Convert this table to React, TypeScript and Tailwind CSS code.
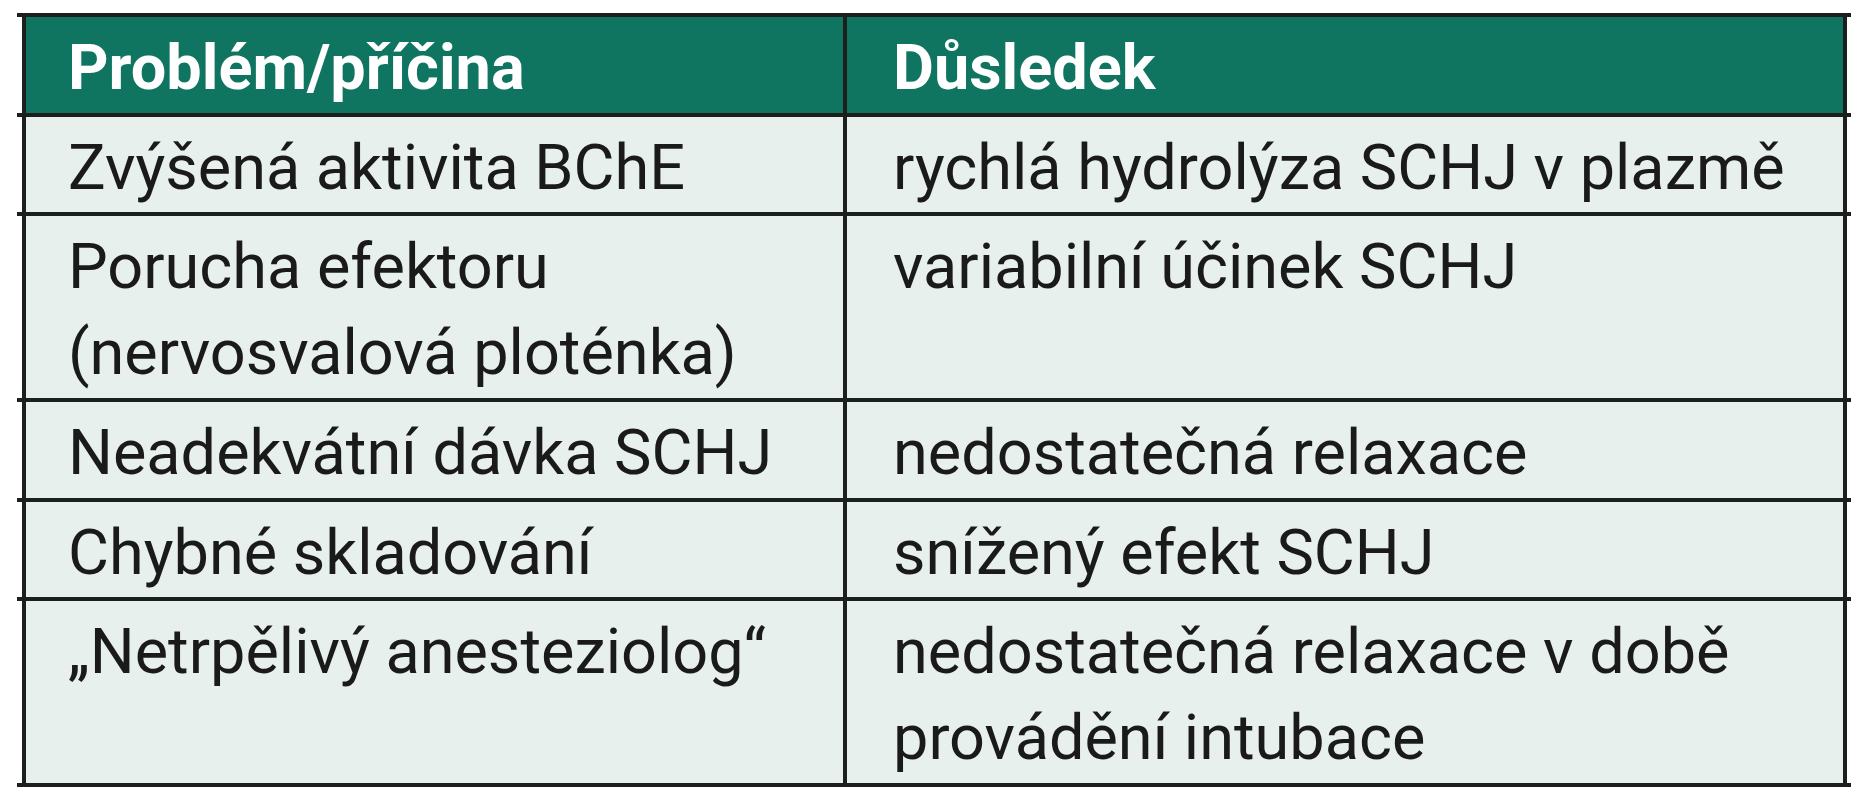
import React from "react";

const rows: { a: string[]; b: string[]; h: string }[] = [
  { a: ["Zvýšená aktivita BChE"], b: ["rychlá hydrolýza SCHJ v plazmě"], h: "h-[95px]" },
  { a: ["Porucha efektoru", "(nervosvalová ploténka)"], b: ["variabilní účinek SCHJ"], h: "h-[182px]" },
  { a: ["Neadekvátní dávka SCHJ"], b: ["nedostatečná relaxace"], h: "h-[96px]" },
  { a: ["Chybné skladování"], b: ["snížený efekt SCHJ"], h: "h-[95px]" },
  { a: ["„Netrpělivý anesteziolog“"], b: ["nedostatečná relaxace v době", "provádění intubace"], h: "h-[182px]" },
];

function Line() {
  return <div className="h-[4px] ml-[17px] w-[1834px] bg-[#1b201f]" />;
}

export default function App() {
  return (
    <div className="w-[1864px] h-[800px] bg-white pt-[13px] overflow-hidden" style={{ fontFamily: "Roboto, 'Liberation Sans', sans-serif" }}>
      <Line />
      <div className="ml-[22px] w-[1825px] h-[96px] flex border-x-4 border-[#1b201f] bg-[#0f7561] text-white font-bold text-[63px] leading-[86px]">
        <div className="w-[821px] border-r-4 border-[#1b201f] pl-[42px] pt-[8px]">Problém/příčina</div>
        <div className="flex-1 pl-[46px] pt-[8px]">Důsledek</div>
      </div>
      {rows.map((r, i) => (
        <React.Fragment key={i}>
          <Line />
          <div className={`ml-[22px] w-[1825px] ${r.h} flex border-x-4 border-[#1b201f] bg-[#e7f0ec] text-[#1a1a1a] text-[63px] leading-[86px]`}>
            <div className="w-[821px] border-r-4 border-[#1b201f] pl-[42px] pt-[8px]">
              {r.a.map((t, j) => (
                <div key={j} className="whitespace-nowrap">{t}</div>
              ))}
            </div>
            <div className="flex-1 pl-[46px] pt-[8px]">
              {r.b.map((t, j) => (
                <div key={j} className="whitespace-nowrap">{t}</div>
              ))}
            </div>
          </div>
        </React.Fragment>
      ))}
      <Line />
    </div>
  );
}
